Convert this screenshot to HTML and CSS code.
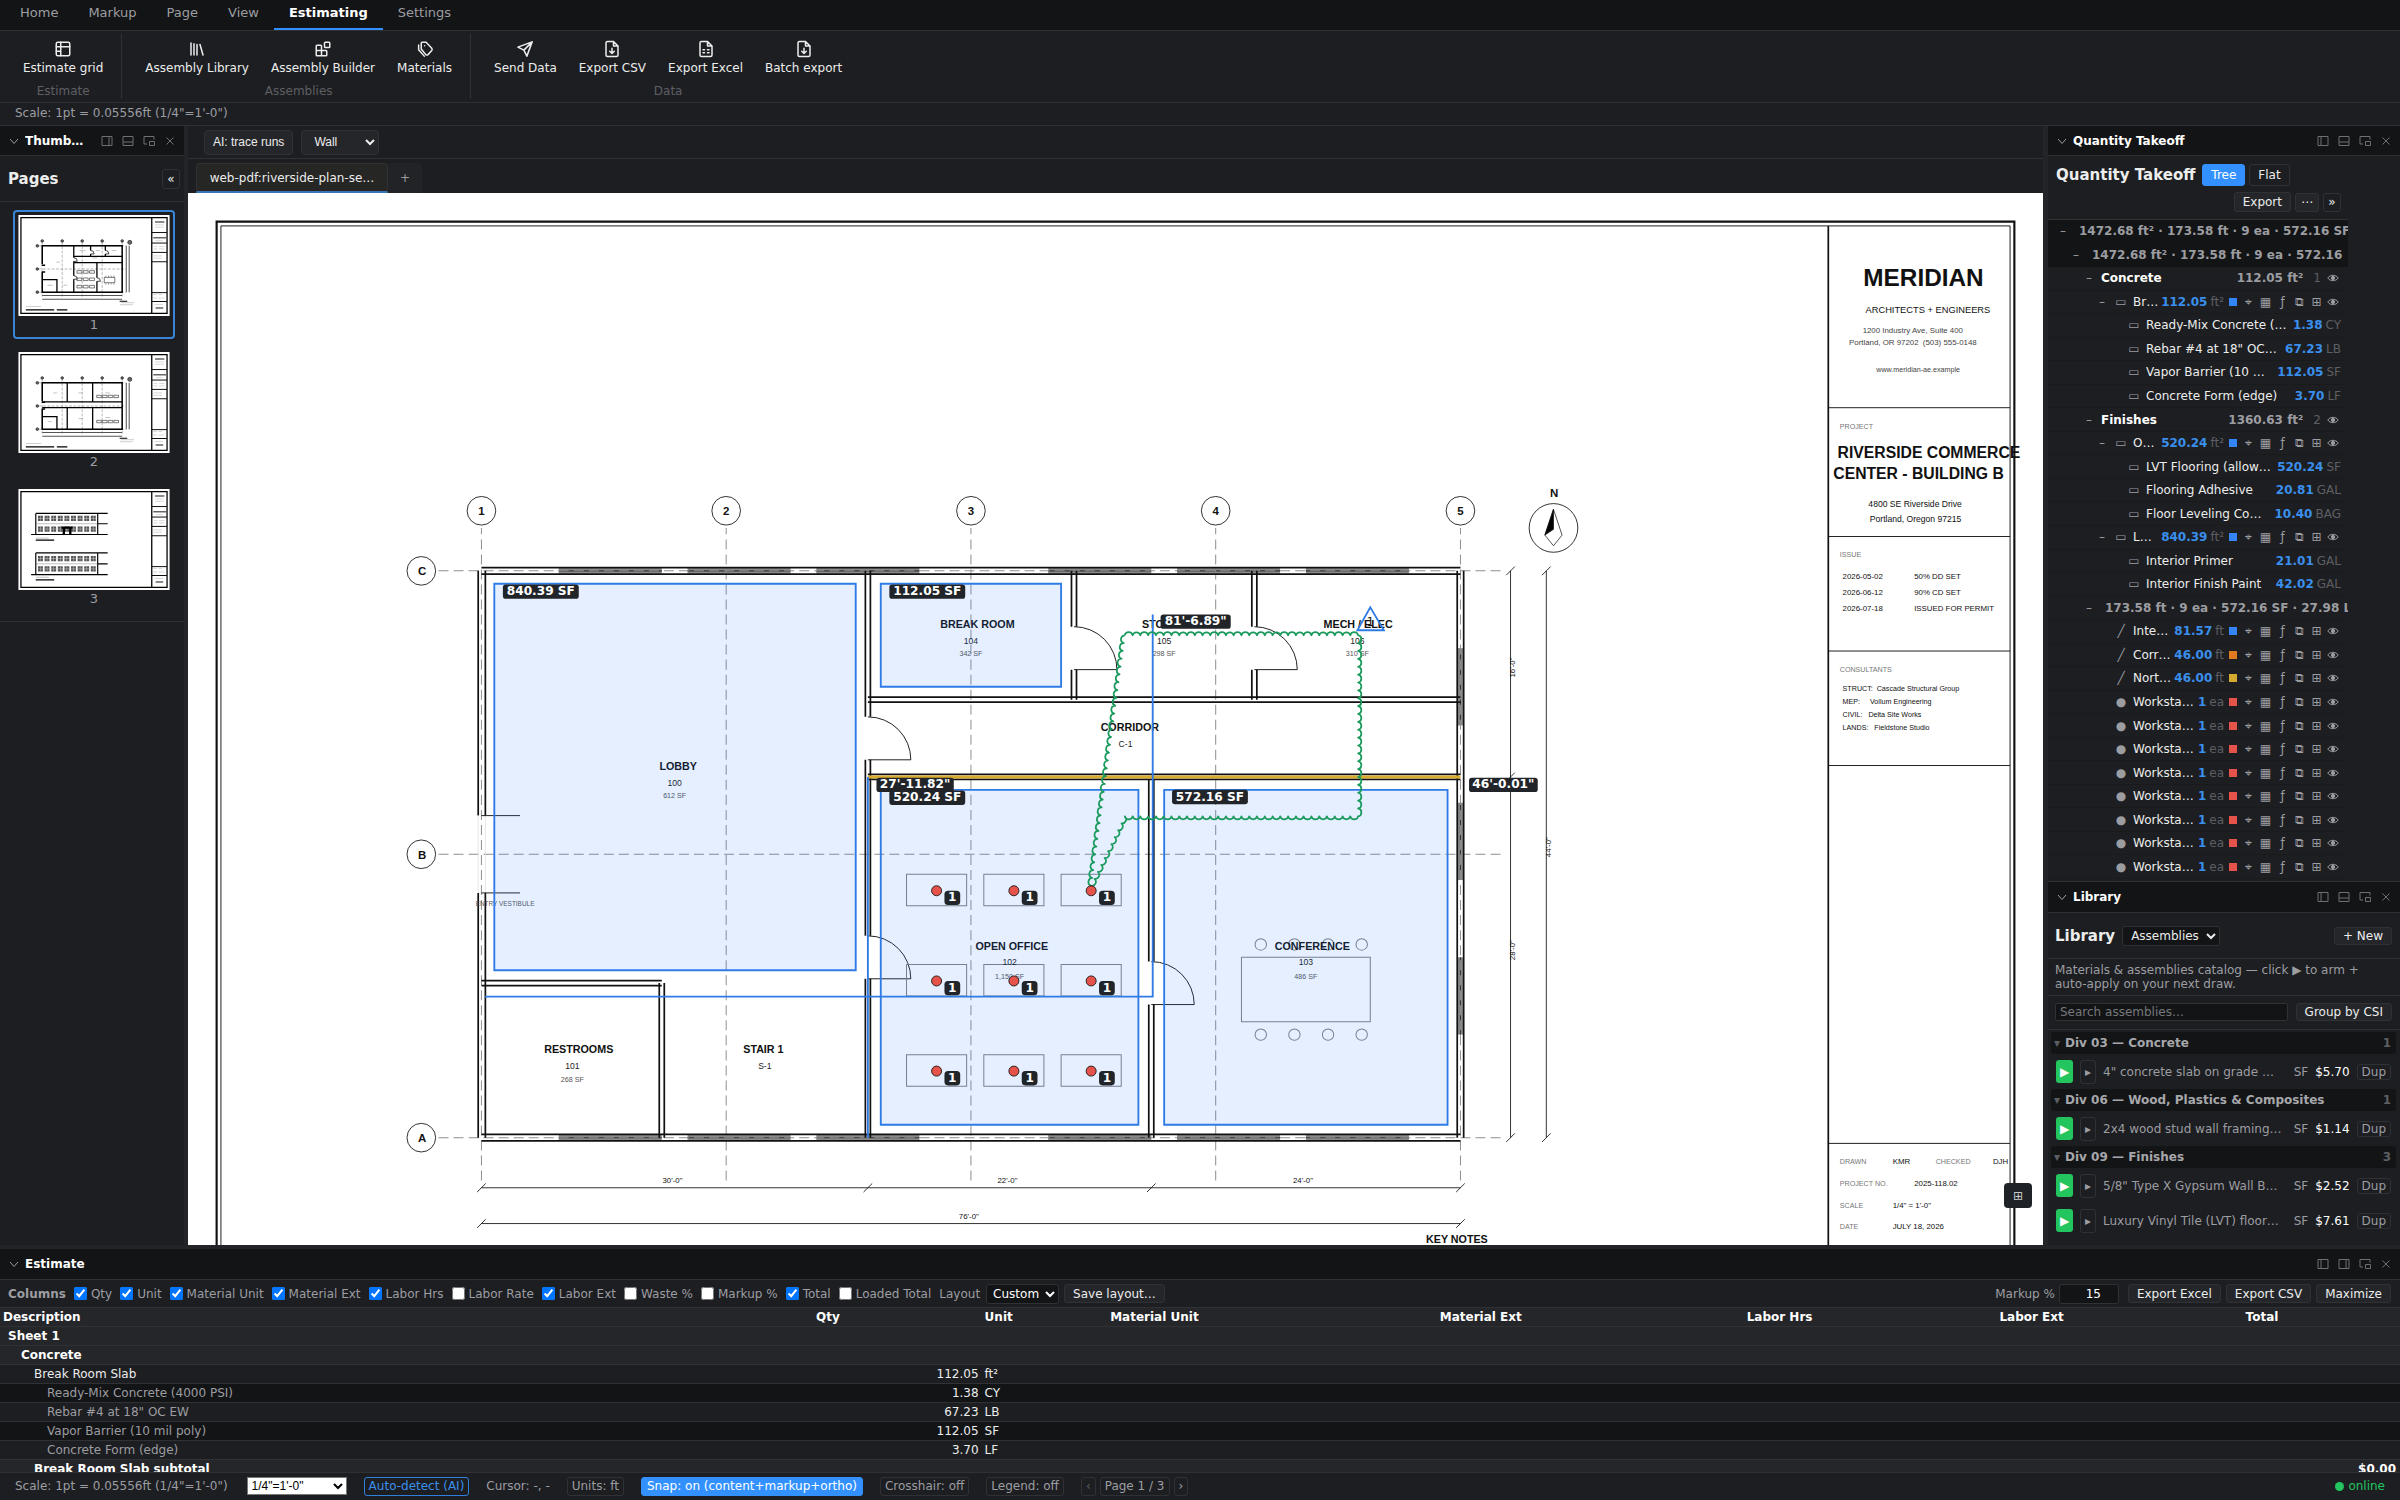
FILE: index.html
```html
<!DOCTYPE html>
<html lang="en">
<head>
<meta charset="utf-8">
<title>Estimating</title>
<link rel="stylesheet" href="styles.css">
</head>
<body>
<svg class="defs" aria-hidden="true">
  <symbol id="i-left" viewBox="0 0 12 12"><path d="M1 1.5h10v9H1zM4 1.5v9"/></symbol>
  <symbol id="i-right" viewBox="0 0 12 12"><path d="M1 1.5h10v9H1zM8 1.5v9"/></symbol>
  <symbol id="i-bottom" viewBox="0 0 12 12"><path d="M1 1.5h10v9H1zM1 7h10"/></symbol>
  <symbol id="i-pop" viewBox="0 0 12 12"><path d="M11 4.5v-3H1v7.500h3M6.500 6.500h5v4h-5z"/></symbol>
  <symbol id="i-close" viewBox="0 0 12 12"><path d="M2.500 2.500l7 7M9.500 2.500l-7 7"/></symbol>
  <symbol id="i-chev" viewBox="0 0 12 12"><path d="M2 4l4 4.500L10 4"/></symbol>
  <symbol id="i-eye" viewBox="0 0 12 12"><path d="M.8 6C3 2.400 9 2.400 11.200 6 9 9.600 3 9.600.8 6z"/><circle cx="6" cy="6" r="1.700" fill="currentColor"/></symbol>
  <symbol id="sheet-frame" viewBox="0 0 2592 1728">
    <path fill="#fff" stroke="none" d="M0 0h2592v1728H0z"/>
    <path stroke-width="22" d="M46 46h2500v1636H46zM2284 46v1636"/>
    <path stroke-width="16" d="M2284 300h260M2284 480h260M2284 640h260M2284 800h260M2284 1328h260M2284 1480h260"/>
    <path stroke-width="26" stroke="#666" d="M2340 118h160M2310 390h220M2350 1590h130"/>
    <path stroke-width="10" stroke="#bbb" d="M2340 170h150M2340 210h150M2350 440h120M2320 540h60M2410 540h90M2320 580h60M2410 580h90M2310 700h150M2310 740h150M2310 1360h60M2400 1360h60M2310 1420h60M2400 1420h100M2330 1530h150"/>
  </symbol>
  <symbol id="sheet-grid" viewBox="0 0 2592 1728">
    <path stroke-width="10" stroke="#888" stroke-dasharray="50 24" d="M410 460v940M752 460v940M1094 460v940M1436 460v940M1778 460v940M350 528h1488M350 924h1488M350 1320h1488"/>
    <g fill="#666" stroke="#333" stroke-width="14"><circle cx="410" cy="444" r="22"/><circle cx="752" cy="444" r="22"/><circle cx="1094" cy="444" r="22"/><circle cx="1436" cy="444" r="22"/><circle cx="1778" cy="444" r="22"/><circle cx="326" cy="528" r="22"/><circle cx="326" cy="924" r="22"/><circle cx="326" cy="1320" r="22"/><circle cx="1908" cy="468" r="34"/></g>
    <path stroke-width="26" d="M410 840V528h1368v792H410V980M400 860h60M400 975h60"/>
    <path stroke-width="18" stroke="#555" d="M410 1378h1368M410 1440h1368M1848 528v792M1898 528v792"/>
    <path stroke-width="20" d="M130 1622h485M660 1622h180M1735 1475h130"/>
    <path stroke-width="10" stroke="#aaa" d="M130 1565h260M1760 1500h220M1740 1535h220"/>
  </symbol>
</svg>

<nav class="tabs" aria-label="Ribbon tabs">
  <a href="#home">Home</a><a href="#markup">Markup</a><a href="#page">Page</a><a href="#view">View</a><a href="#estimating" class="active" aria-current="page">Estimating</a><a href="#settings">Settings</a>
</nav>

<div class="ribbon">
  <section class="group">
    <div class="tools">
      <button><svg viewBox="0 0 24 24"><rect x="3" y="3" width="18" height="18" rx="2"/><path d="M3 9h18M9 3v18M3 15h6"/></svg>Estimate grid</button>
    </div>
    <p>Estimate</p>
  </section>
  <section class="group">
    <div class="tools">
      <button><svg viewBox="0 0 24 24"><path d="M16 6l4 14M12 6v14M8 5v15M4 4v16"/></svg>Assembly Library</button>
      <button><svg viewBox="0 0 24 24"><rect x="14" y="3" width="7" height="7" rx="1"/><path d="M10 21V8a1 1 0 0 0-1-1H4a1 1 0 0 0-1 1v12a1 1 0 0 0 1 1h12a1 1 0 0 0 1-1v-5a1 1 0 0 0-1-1H3"/></svg>Assembly Builder</button>
      <button><svg viewBox="0 0 24 24"><path d="M8 3h5.500l7.500 8a2.500 2.500 0 0 1 0 3l-5 5.500a2.500 2.500 0 0 1-3 0L7 12V4a1 1 0 0 1 1-1zM11.500 7.500v.1M3.500 6.500V13l7.500 8.500"/></svg>Materials</button>
    </div>
    <p>Assemblies</p>
  </section>
  <section class="group">
    <div class="tools">
      <button><svg viewBox="0 0 24 24"><path d="M21.500 2.500L14.500 21.500l-4-8-8-4zM21.500 2.500l-11 11"/></svg>Send Data</button>
      <button><svg viewBox="0 0 24 24"><path d="M14 2H6a2 2 0 0 0-2 2v16a2 2 0 0 0 2 2h12a2 2 0 0 0 2-2V8zM14 2v6h6M12 11v7M9 15l3 3 3-3"/></svg>Export CSV</button>
      <button><svg viewBox="0 0 24 24"><path d="M14 2H6a2 2 0 0 0-2 2v16a2 2 0 0 0 2 2h12a2 2 0 0 0 2-2V8zM14 2v6h6M8 13h2M14 13h2M8 17h2M14 17h2"/></svg>Export Excel</button>
      <button><svg viewBox="0 0 24 24"><path d="M14 2H6a2 2 0 0 0-2 2v16a2 2 0 0 0 2 2h12a2 2 0 0 0 2-2V8zM14 2v6h6M12 11v7M9 15l3 3 3-3"/></svg>Batch export</button>
    </div>
    <p>Data</p>
  </section>
</div>
<div class="scale-line">Scale: 1pt = 0.05556ft (1/4"=1'-0")</div>

<main class="workspace">
  <aside class="left">
    <header class="panel-head">
      <svg class="chev"><use href="#i-chev"/></svg><h2>Thumb…</h2>
      <button aria-label="Dock right"><svg><use href="#i-right"/></svg></button><button aria-label="Dock bottom"><svg><use href="#i-bottom"/></svg></button><button aria-label="Float"><svg><use href="#i-pop"/></svg></button><button aria-label="Close"><svg><use href="#i-close"/></svg></button>
    </header>
    <div class="pages-head"><h3>Pages</h3><button class="btn square" aria-label="Collapse">«</button></div>
    <ol class="thumbs">
      <li class="current">
        <svg viewBox="0 0 2592 1728"><use href="#sheet-frame"/><use href="#sheet-grid"/>
          <path stroke-width="22" d="M950 528v204M950 792v246M950 1098v222M950 708h828M950 816h828M1238 528v78M1238 666v42M1490 528v78M1490 666v42M1346 816v258M1346 1134v186M410 1104h252v216"/>
          <path stroke-width="12" d="M950 732q60 0 60 60h-60M950 1038q60 0 60 60h-60M1238 606q60 0 60 60h-60M1490 606q60 0 60 60h-60M1346 1074q60 0 60 60h-60"/>
          <path stroke-width="12" stroke="#444" d="M1004 952h84v44h-84zM1112 952h84v44h-84zM1220 952h84v44h-84zM1004 1078h84v44h-84zM1112 1078h84v44h-84zM1220 1078h84v44h-84zM1004 1204h84v44h-84zM1112 1204h84v44h-84zM1220 1204h84v44h-84zM1472 1068h180v90h-180z"/>
          <path stroke-width="16" stroke="#555" stroke-dasharray="16 30" d="M1490 1048h160M1490 1178h160"/>
          <path stroke-width="12" stroke="#aaa" d="M650 806h70M500 1202h90M770 1202h70M1050 608h100M1330 608h70M1600 608h80M1270 735h80"/>
        </svg><span>1</span>
      </li>
      <li>
        <svg viewBox="0 0 2592 1728"><use href="#sheet-frame"/><use href="#sheet-grid"/>
          <path stroke-width="22" d="M838 528v324M838 950v370M1273 528v324M1273 950v370M410 852h1368M410 950h1368M410 1104h252v216"/>
          <path stroke-width="12" stroke="#444" d="M1342 740h80v40h-80zM1440 740h80v40h-80zM1538 740h80v40h-80zM1636 740h80v40h-80zM1342 1170h80v40h-80zM1440 1170h80v40h-80zM1538 1170h80v40h-80zM1636 1170h80v40h-80z"/>
          <path stroke-width="12" stroke="#aaa" d="M600 700h60M1030 700h80M1490 700h80M1030 1140h80M1490 1120h80M510 1190h60"/>
        </svg><span>2</span>
      </li>
      <li>
        <svg viewBox="0 0 2592 1728"><use href="#sheet-frame"/>
          <path stroke-width="20" d="M300 418h1230M300 418v360M1359 418v360M220 778h1310M1359 594h171M300 1093h1230M300 1093v371M1359 1093v371M220 1464h1310M1359 1280h171M300 875h315M300 1556h315"/>
          <path stroke-width="8" stroke="#777" d="M300 594h1059M300 1280h1059M300 840h220M300 1510h220"/>
          <path stroke-width="90" stroke="#555" stroke-dasharray="84 29" d="M338 504h1000M338 685h1000M338 1190h1000M338 1367h1000"/>
          <path stroke-width="8" stroke="#ddd" d="M338 504h1000M338 685h1000M338 1190h1000M338 1367h1000"/>
          <path stroke-width="90" stroke="#ccc" stroke-dasharray="8 105" stroke-dashoffset="-38" d="M338 504h1000M338 685h1000M338 1190h1000M338 1367h1000"/>
          <path stroke-width="40" d="M740 660h190M780 660v118M890 660v118"/>
        </svg><span>3</span>
      </li>
    </ol>
  </aside>

  <section class="center">
    <div class="canvas-tools">
      <button class="arial">AI: trace runs</button>
      <select class="arial" aria-label="Trace type"><option>Wall</option></select>
    </div>
    <div class="doc-tabs"><button class="doc">web-pdf:riverside-plan-se…</button><button class="add" aria-label="New tab">+</button></div>
    <div class="canvas">
      <svg class="sheet" viewBox="0 0 2592 1728">
        <g class="frame">
          <path class="w3" d="M40 40h2512v1648H40z"/>
          <path class="w1" d="M46 46h2500v1636H46z"/>
          <path class="w2" d="M2292 46v1636"/>
          <path class="w1" d="M2292 300h254M2292 480h254M2292 640h254M2292 800h254M2292 1328h254"/>
        </g>
        <g id="windows" class="windows"></g>
        <g class="grid-lines">
          <path d="M410 1380V468M752 1380V468M1094 1380V468M1436 1380V468M1778 1380V468M350 528H1838M350 924H1838M350 1320H1838"/>
        </g>
        <g class="walls">
          <path class="w2" d="M410 523.500H1778M410 532.500H1778M410 1315.500H1778M410 1324.500H1778M1773.500 528V1320M1782.500 528V1320M405.500 528V870M415.500 528V870M405.500 978V1320M415.500 978V1320"/>
          <path class="faint" d="M405.500 870V978M415.500 870V978"/>
          <path class="w2" d="M946.500 528V732M953.500 528V732M946.500 792V1038M953.500 792V1038M946.500 1098V1320M953.500 1098V1320M950 704.500H1778M950 711.500H1778M950 812.500H1778M950 819.500H1778M1234.500 528V606M1241.500 528V606M1234.500 666V708M1241.500 666V708M1486.500 528V606M1493.500 528V606M1486.500 666V708M1493.500 666V708M1342.500 819V1074M1349.500 819V1074M1342.500 1134V1320M1349.500 1134V1320M410 1100.500H662M410 1107.500H662M658.500 1104V1320M665.500 1104V1320"/>
          <path class="w1" d="M410 870h54M410 978h54M950 732a60 60 0 0 1 60 60h-60M950 1038a60 60 0 0 1 60 60h-60M1238 606a60 60 0 0 1 60 60h-60M1490 606a60 60 0 0 1 60 60h-60M1346 1074a60 60 0 0 1 60 60h-60"/>
        </g>
        <g class="furniture">
          <path d="M1004 952h84v44h-84zM1112 952h84v44h-84zM1220 952h84v44h-84zM1004 1078h84v44h-84zM1112 1078h84v44h-84zM1220 1078h84v44h-84zM1004 1204h84v44h-84zM1112 1204h84v44h-84zM1220 1204h84v44h-84zM1472 1068h180v90h-180z"/>
          <circle cx="1499" cy="1050" r="8"/><circle cx="1546" cy="1050" r="8"/><circle cx="1593" cy="1050" r="8"/><circle cx="1640" cy="1050" r="8"/>
          <circle cx="1499" cy="1176" r="8"/><circle cx="1546" cy="1176" r="8"/><circle cx="1593" cy="1176" r="8"/><circle cx="1640" cy="1176" r="8"/>
        </g>
        <g class="bubbles">
          <circle cx="410" cy="444" r="20"/><circle cx="752" cy="444" r="20"/><circle cx="1094" cy="444" r="20"/><circle cx="1436" cy="444" r="20"/><circle cx="1778" cy="444" r="20"/><circle cx="326" cy="528" r="20"/><circle cx="326" cy="924" r="20"/><circle cx="326" cy="1320" r="20"/>
          <text x="410" y="450">1</text><text x="752" y="450">2</text><text x="1094" y="450">3</text><text x="1436" y="450">4</text><text x="1778" y="450">5</text><text x="327" y="534">C</text><text x="327" y="930">B</text><text x="327" y="1326">A</text>
          <circle cx="1908" cy="468" r="34"/><text x="1909" y="425">N</text>
          <path d="M1908 442l12 36-12 15-12-15z"/><path class="solid" d="M1908 442v28l-12 8z"/>
        </g>
        <g class="rooms">
          <text class="n" x="685" y="806">LOBBY</text><text class="i" x="680" y="828">100</text><text class="a" x="680" y="846">612 SF</text>
          <text class="n" x="1103" y="608">BREAK ROOM</text><text class="i" x="1094" y="630">104</text><text class="a" x="1094" y="647">342 SF</text>
          <text class="n" x="1370" y="608">STORAGE</text><text class="i" x="1364" y="630">105</text><text class="a" x="1364" y="647">298 SF</text>
          <text class="n" x="1635" y="608">MECH / ELEC</text><text class="i" x="1634" y="630">106</text><text class="a" x="1634" y="647">310 SF</text>
          <text class="n" x="1316" y="752">CORRIDOR</text><text class="i" x="1310" y="774">C-1</text>
          <text class="n" x="1151" y="1058">OPEN OFFICE</text><text class="i" x="1148" y="1079">102</text><text class="a" x="1148" y="1098">1,150 SF</text>
          <text class="n" x="1571" y="1058">CONFERENCE</text><text class="i" x="1562" y="1079">103</text><text class="a" x="1562" y="1098">486 SF</text>
          <text class="n" x="546" y="1202">RESTROOMS</text><text class="i" x="537" y="1224">101</text><text class="a" x="537" y="1242">268 SF</text>
          <text class="n" x="804" y="1202">STAIR 1</text><text class="i" x="806" y="1224">S-1</text>
          <text class="v" x="443" y="996">ENTRY VESTIBULE</text>
          <text class="n" x="1773" y="1467">KEY NOTES</text>
        </g>
        <g class="dims">
          <path d="M410 1390H1778M410 1440H1778M1848 528V1320M1898 528V1320"/>
          <path d="M404 1396l12-12M944 1396l12-12M1340 1396l12-12M1772 1396l12-12M404 1446l12-12M1772 1446l12-12M1842 534l12-12M1842 822l12-12M1842 1326l12-12M1892 534l12-12M1892 1326l12-12"/>
          <text x="677" y="1384">30'-0"</text><text x="1145" y="1384">22'-0"</text><text x="1558" y="1384">24'-0"</text><text x="1091" y="1434">76'-0"</text>
          <text transform="translate(1854 663) rotate(-90)">16'-0"</text><text transform="translate(1854 1058) rotate(-90)">28'-0"</text><text transform="translate(1904 914) rotate(-90)">44'-0"</text>
        </g>
        <g class="title-block">
          <text class="t34" x="2341" y="130">MERIDIAN</text>
          <text class="t13" x="2344" y="168">ARCHITECTS + ENGINEERS</text>
          <text class="t11 mid" x="2340" y="196">1200 Industry Ave, Suite 400</text>
          <text class="t11 mid" x="2321" y="213">Portland, OR 97202  (503) 555-0148</text>
          <text class="t10 mid" x="2359" y="250">www.meridian-ae.example</text>
          <text class="t10 dim" x="2308" y="330">PROJECT</text>
          <text class="t22" x="2305" y="370">RIVERSIDE COMMERCE</text>
          <text class="t22" x="2299" y="400">CENTER - BUILDING B</text>
          <text class="t12" x="2348" y="439">4800 SE Riverside Drive</text>
          <text class="t12" x="2350" y="460">Portland, Oregon 97215</text>
          <text class="t10 dim" x="2308" y="509">ISSUE</text>
          <text class="t11" x="2312" y="540">2026-05-02</text><text class="t11" x="2412" y="540">50% DD SET</text>
          <text class="t11" x="2312" y="562">2026-06-12</text><text class="t11" x="2412" y="562">90% CD SET</text>
          <text class="t11" x="2312" y="584">2026-07-18</text><text class="t11" x="2412" y="584">ISSUED FOR PERMIT</text>
          <text class="t10 dim" x="2308" y="669">CONSULTANTS</text>
          <text class="t10" x="2312" y="696">STRUCT:  Cascade Structural Group</text>
          <text class="t10" x="2312" y="714">MEP:     Vollum Engineering</text>
          <text class="t10" x="2312" y="732">CIVIL:   Delta Site Works</text>
          <text class="t10" x="2312" y="750">LANDS:   Fieldstone Studio</text>
          <text class="t10 dim" x="2308" y="1357">DRAWN</text><text class="t11" x="2382" y="1357">KMR</text><text class="t10 dim" x="2442" y="1357">CHECKED</text><text class="t11" x="2522" y="1357">DJH</text>
          <text class="t10 dim" x="2308" y="1387">PROJECT NO.</text><text class="t11" x="2412" y="1387">2025-118.02</text>
          <text class="t10 dim" x="2308" y="1418">SCALE</text><text class="t11" x="2382" y="1418">1/4" = 1'-0"</text>
          <text class="t10 dim" x="2308" y="1448">DATE</text><text class="t11" x="2382" y="1448">JULY 18, 2026</text>
        </g>
        <g class="markups">
          <path class="area" d="M428 546h505v540H428zM968 546h252v144H968zM968 834h360v468H968zM1364 834h396v468h-396z"/>
          <path class="yellow" d="M950 816H1778"/>
          <path class="blue" d="M950 816V1320M1348 589V1123H415M1652 579l19 32h-37z"/>
          <text class="rev" x="1652" y="605">1</text>
          <path id="cloud" class="cloud"/>
          <g id="counts"></g>
          <g id="pills"></g>
        </g>
      </svg>
      <button class="grid-toggle" aria-label="Toggle grid">⊞</button>
    </div>
  </section>

  <aside class="right">
    <section class="takeoff">
      <header class="panel-head">
        <svg class="chev"><use href="#i-chev"/></svg><h2>Quantity Takeoff</h2>
        <button aria-label="Dock left"><svg><use href="#i-left"/></svg></button><button aria-label="Dock bottom"><svg><use href="#i-bottom"/></svg></button><button aria-label="Float"><svg><use href="#i-pop"/></svg></button><button aria-label="Close"><svg><use href="#i-close"/></svg></button>
      </header>
      <div class="takeoff-body">
        <div class="takeoff-head">
          <div class="line"><h3>Quantity Takeoff</h3><button class="btn primary">Tree</button><button class="btn ghost">Flat</button></div>
          <div class="line end"><button class="btn">Export</button><button class="btn dots">⋯</button><button class="btn square" aria-label="Collapse">»</button></div>
        </div>
        <ul id="tree" class="tree"></ul>
      </div>
    </section>
    <section class="library">
      <header class="panel-head">
        <svg class="chev"><use href="#i-chev"/></svg><h2>Library</h2>
        <button aria-label="Dock left"><svg><use href="#i-left"/></svg></button><button aria-label="Dock bottom"><svg><use href="#i-bottom"/></svg></button><button aria-label="Float"><svg><use href="#i-pop"/></svg></button><button aria-label="Close"><svg><use href="#i-close"/></svg></button>
      </header>
      <div class="lib-title"><h3>Library</h3><select aria-label="Library type"><option>Assemblies</option></select><button class="btn">+ New</button></div>
      <p class="lib-note">Materials &amp; assemblies catalog — click ▶ to arm + auto-apply on your next draw.</p>
      <div class="lib-search"><input type="text" placeholder="Search assemblies…" aria-label="Search assemblies"><button class="btn">Group by CSI</button></div>
      <div class="lib-list">
        <h4><i>▾</i>Div 03 — Concrete<span>1</span></h4>
        <div class="item"><button class="arm" aria-label="Arm">▶</button><button class="open" aria-label="Expand">▸</button><span class="name">4" concrete slab on grade …</span><span>SF</span><b>$5.70</b><button class="dup">Dup</button></div>
        <h4><i>▾</i>Div 06 — Wood, Plastics &amp; Composites<span>1</span></h4>
        <div class="item"><button class="arm" aria-label="Arm">▶</button><button class="open" aria-label="Expand">▸</button><span class="name">2x4 wood stud wall framing…</span><span>SF</span><b>$1.14</b><button class="dup">Dup</button></div>
        <h4><i>▾</i>Div 09 — Finishes<span>3</span></h4>
        <div class="item"><button class="arm" aria-label="Arm">▶</button><button class="open" aria-label="Expand">▸</button><span class="name">5/8" Type X Gypsum Wall B…</span><span>SF</span><b>$2.52</b><button class="dup">Dup</button></div>
        <div class="item"><button class="arm" aria-label="Arm">▶</button><button class="open" aria-label="Expand">▸</button><span class="name">Luxury Vinyl Tile (LVT) floor…</span><span>SF</span><b>$7.61</b><button class="dup">Dup</button></div>
      </div>
    </section>
  </aside>
</main>

<section class="estimate">
  <header class="panel-head">
    <svg class="chev"><use href="#i-chev"/></svg><h2>Estimate</h2>
    <button aria-label="Dock left"><svg><use href="#i-left"/></svg></button><button aria-label="Dock right"><svg><use href="#i-right"/></svg></button><button aria-label="Float"><svg><use href="#i-pop"/></svg></button><button aria-label="Close"><svg><use href="#i-close"/></svg></button>
  </header>
  <div class="columns">
    <strong>Columns</strong>
    <label><input type="checkbox" checked>Qty</label><label><input type="checkbox" checked>Unit</label><label><input type="checkbox" checked>Material Unit</label><label><input type="checkbox" checked>Material Ext</label><label><input type="checkbox" checked>Labor Hrs</label><label><input type="checkbox">Labor Rate</label><label><input type="checkbox" checked>Labor Ext</label><label><input type="checkbox">Waste %</label><label><input type="checkbox">Markup %</label><label><input type="checkbox" checked>Total</label><label><input type="checkbox">Loaded Total</label>
    <label class="pick">Layout<select><option>Custom</option></select></label>
    <button class="btn">Save layout…</button>
    <label class="pick markup">Markup %<input type="text" value="15"></label>
    <button class="btn">Export Excel</button><button class="btn">Export CSV</button><button class="btn">Maximize</button>
  </div>
  <div class="table-wrap">
    <table>
      <colgroup><col class="c-desc"><col class="c-qty"><col class="c-unit"><col class="c-mu"><col class="c-me"><col class="c-lh"><col class="c-le"><col class="c-tot"><col class="c-end"></colgroup>
      <thead><tr><th class="l">Description</th><th>Qty</th><th class="l">Unit</th><th>Material Unit</th><th>Material Ext</th><th>Labor Hrs</th><th>Labor Ext</th><th>Total</th><th></th></tr></thead>
      <tbody>
        <tr class="grp"><td class="d0" colspan="9">Sheet 1</td></tr>
        <tr class="grp"><td class="d1" colspan="9">Concrete</td></tr>
        <tr><td class="d2">Break Room Slab</td><td class="num">112.05</td><td>ft²</td><td colspan="6"></td></tr>
        <tr class="alt"><td class="d3">Ready-Mix Concrete (4000 PSI)</td><td class="num">1.38</td><td>CY</td><td colspan="6"></td></tr>
        <tr><td class="d3">Rebar #4 at 18" OC EW</td><td class="num">67.23</td><td>LB</td><td colspan="6"></td></tr>
        <tr class="alt"><td class="d3">Vapor Barrier (10 mil poly)</td><td class="num">112.05</td><td>SF</td><td colspan="6"></td></tr>
        <tr><td class="d3">Concrete Form (edge)</td><td class="num">3.70</td><td>LF</td><td colspan="6"></td></tr>
        <tr class="grp"><td class="d2" colspan="8">Break Room Slab subtotal</td><td class="num">$0.00</td></tr>
      </tbody>
    </table>
  </div>
</section>

<footer class="status">
  <span>Scale: 1pt = 0.05556ft (1/4"=1'-0")</span>
  <select class="arial" aria-label="Scale"><option>1/4"=1'-0"</option></select>
  <button class="outline">Auto-detect (AI)</button>
  <span>Cursor: -, -</span>
  <button>Units: ft</button>
  <button class="on">Snap: on (content+markup+ortho)</button>
  <button>Crosshair: off</button>
  <button>Legend: off</button>
  <div class="pager"><button class="dimmed" aria-label="Previous page">‹</button><button>Page 1 / 3</button><button aria-label="Next page">›</button></div>
  <span class="online">online</span>
</footer>
<script src="app.js"></script>
</body>
</html>
```
FILE: styles.css
```css
:root {
  --deep: #131416;
  --panel: #1d1e21;
  --raised: #25262a;
  --line: #303135;
  --text: #eceded;
  --muted: #9c9da1;
  --dim: #5d5f64;
  --blue: #3291ff;
}
* { box-sizing: border-box; }
body {
  margin: 0; height: 100vh; display: flex; flex-direction: column; overflow: hidden;
  background: var(--panel); color: var(--text);
  font: 12px/14px "DejaVu Sans", sans-serif;
}
h2, h3, h4, p, ul, ol { margin: 0; padding: 0; list-style: none; }
h2 { font-size: 12px; }
h3 { font-size: 15px; line-height: 18px; }
button, select, input { font: inherit; color: inherit; margin: 0; }
button { background: none; border: 0; padding: 0; white-space: nowrap; }
.defs { position: absolute; width: 0; height: 0; }
.arial { font-family: "Liberation Sans", Arial, sans-serif; }
symbol, .thumbs svg { fill: none; stroke: #000; }

.tabs { display: flex; height: 31px; padding-left: 5px; background: var(--deep); border-bottom: 1px solid var(--line); font-size: 13px; line-height: 26px; flex: none; }
.tabs a { padding: 0 15px; color: var(--muted); text-decoration: none; border-bottom: 2px solid transparent; }
.tabs .active { color: #fff; font-weight: bold; border-color: var(--blue); }

.ribbon { display: flex; height: 72px; padding: 3px 0; border-bottom: 1px solid var(--line); flex: none; }
.group { padding: 4px 8px 0 13px; border-right: 1px solid var(--line); text-align: center; }
.group:last-child { border: 0; }
.group p { color: var(--dim); margin-top: 5px; }
.tools { display: flex; gap: 2px; justify-content: center; }
.tools button { display: flex; flex-direction: column; align-items: center; gap: 3px; padding: 0 10px; height: 41px; }
.tools svg { width: 18px; height: 18px; margin-top: 2px; fill: none; stroke: currentColor; stroke-width: 2; stroke-linecap: round; stroke-linejoin: round; }
.scale-line { height: 23px; padding: 3px 15px; color: var(--muted); border-bottom: 1px solid var(--line); flex: none; }

.workspace { flex: 1; min-height: 0; display: grid; grid-template-columns: 188px 1fr 357px; grid-template-rows: minmax(0, 1fr); }
.left { border-right: 4px solid #232427; }
.right { border-left: 5px solid #232427; display: flex; flex-direction: column; min-width: 0; }

.panel-head { display: flex; align-items: center; height: 30px; padding: 0 8px; background: var(--deep); border-bottom: 1px solid var(--line); color: #fff; flex: none; }
.panel-head h2 { flex: 1; min-width: 0; margin-left: 5px; overflow: hidden; text-overflow: ellipsis; white-space: nowrap; }
.panel-head svg { display: block; width: 12px; height: 12px; fill: none; }
.panel-head button { margin-left: 9px; color: #6d6f74; }
.chev { color: var(--muted); }
symbol#i-left, symbol#i-right, symbol#i-bottom, symbol#i-pop, symbol#i-close, symbol#i-chev, symbol#i-eye { stroke: currentColor; }

.btn { height: 20px; padding: 0 8px; background: var(--raised); border: 1px solid var(--line); border-radius: 3px; }
.square { width: 18px; padding: 0; background: none; }
.primary { background: var(--blue); border-color: var(--blue); color: #fff; }
.ghost { background: none; }

.pages-head { display: flex; justify-content: space-between; align-items: center; height: 46px; padding: 0 4px 0 8px; border-bottom: 1px solid var(--line); }
.thumbs { display: flex; flex-direction: column; gap: 8px; padding: 8px 9px 8px 13px; border-bottom: 1px solid var(--line); }
.thumbs li { padding: 3px; border: 2px solid transparent; border-radius: 4px; text-align: center; color: var(--muted); font-size: 13px; line-height: 18px; }
.thumbs .current { border-color: #3a84d8; }
.thumbs svg { display: block; width: 100%; height: 101px; }
.thumbs span { display: block; }

.center { display: flex; flex-direction: column; min-width: 0; }
.canvas-tools { display: flex; align-items: center; gap: 8px; height: 33px; padding: 0 16px; border-bottom: 1px solid var(--line); flex: none; }
.canvas-tools > * { height: 25px; background: var(--raised); border: 1px solid var(--line); border-radius: 4px; padding: 0 8px; }
.canvas-tools select { width: 78px; }
.doc-tabs { display: flex; height: 34px; padding: 4px 8px 0; flex: none; }
.doc { width: 192px; background: #262624; border: 1px solid var(--line); border-bottom: 2px solid #3a74b8; border-radius: 4px 4px 0 0; height: 30px; }
.add { width: 34px; height: 30px; background: #222326; color: var(--muted); border-radius: 4px 4px 0 0; }
.canvas { position: relative; flex: 1; min-height: 0; background: #fff; overflow: hidden; }
.sheet { display: block; width: 100%; fill: none; stroke: none; font-family: "Liberation Sans", Arial, sans-serif; }
.grid-toggle { position: absolute; right: 11px; bottom: 37px; width: 28px; height: 25px; background: #1f2226; border-radius: 4px; color: #c8c9cb; }

.sheet path, .sheet circle { stroke: #111; }
.sheet .w1 { stroke-width: 1.3; }
.sheet .w2 { stroke-width: 2.4; }
.sheet .w3 { stroke-width: 3; }
.sheet .faint { stroke: #ddd; }
.sheet text { fill: #111; stroke: none; white-space: pre; }
.sheet .grid-lines path { stroke: #8f8f8f; stroke-width: 1.4; stroke-dasharray: 14 7; }
.sheet .windows rect { fill: #8a8a8a; }
.sheet .windows path { stroke: #333; stroke-width: 1.5; }
.sheet .furniture * { stroke: #808080; stroke-width: 1.4; }
.sheet .bubbles circle { fill: #fff; stroke-width: 1.2; }
.sheet .bubbles text { font-size: 16px; font-weight: bold; text-anchor: middle; }
.sheet .bubbles .solid { fill: #000; }
.rooms text { text-anchor: middle; }
.rooms .n { font-size: 15px; font-weight: bold; }
.sheet .rooms .i { font-size: 12px; fill: #222; }
.sheet .rooms .a { font-size: 10px; fill: #555; }
.sheet .rooms .v { font-size: 9px; fill: #555; }
.dims path { stroke-width: 1.2; }
.dims text { font-size: 11px; text-anchor: middle; }
.title-block .t34 { font-size: 34px; font-weight: bold; }
.title-block .t22 { font-size: 22px; font-weight: bold; }
.title-block .t13 { font-size: 13px; }
.title-block .t12 { font-size: 12px; }
.title-block .t11 { font-size: 11px; }
.title-block .t10 { font-size: 10px; }
.sheet .title-block .mid { fill: #444; }
.sheet .title-block .dim { fill: #777; }
.sheet .area { fill: #2f7fff20; stroke: #2f7be6; stroke-width: 2.6; }
.sheet .yellow { stroke: #d9ab2f; stroke-width: 4; }
.sheet .blue { stroke: #2f7be6; stroke-width: 2.6; }
.sheet .cloud { stroke: #1a9a5c; stroke-width: 2.4; stroke-linejoin: round; }
.sheet .rev { font: 16px "DejaVu Sans", sans-serif; text-anchor: middle; }
#counts circle { fill: #e5534b; stroke: #111; stroke-width: 1.2; }
#counts rect, #pills rect { fill: #212529; }
#counts text, #pills text { fill: #fff; font: bold 17px "DejaVu Sans", sans-serif; text-anchor: middle; }

.takeoff { flex: 1; min-height: 0; display: flex; flex-direction: column; }
.takeoff-body { width: 300px; flex: 1; min-height: 0; display: flex; flex-direction: column; }
.takeoff-head { display: flex; flex-direction: column; gap: 6px; padding: 8px 7px 7px 8px; border-bottom: 1px solid var(--line); }
.line { display: flex; align-items: center; gap: 4px; }
.line h3 { margin-right: 3px; }
.line .btn { height: 22px; }
.line .dots { width: 24px; padding: 0; height: 19px; }
.line .square { height: 19px; }
.end { justify-content: flex-end; }
.end .btn:first-child { height: 20px; }
.tree { flex: 1; min-height: 0; display: grid; grid-auto-rows: minmax(0, 1fr); overflow: hidden; padding-bottom: 2px; }
.tree li { display: flex; align-items: center; padding-right: 7px; border-bottom: 1px solid #191a1c; white-space: nowrap; min-width: 0; overflow: hidden; line-height: 16px; }
.tree .cat, .tree .mark, .tree .leaf { padding-right: 9px; }
.tree .total { background: var(--deep); border-color: var(--deep); color: var(--muted); font-weight: bold; padding-right: 0; }
.tree .sum { color: var(--muted); font-weight: bold; padding-right: 0; }
.tree .l0 { padding-left: 12px; }
.tree .l1 { padding-left: 25px; }
.tree .l2 { padding-left: 38px; }
.tree .l3 { padding-left: 51px; }
.tree .l4 { padding-left: 79px; }
.tog { width: 15px; color: var(--muted); font-weight: normal; flex: none; }
.total .tog, .sum .tog { width: 19px; }
.cat b { flex: 1; color: #fff; }
.cat em { font-style: normal; font-weight: bold; color: var(--muted); }
.cat small { margin: 0 4px 0 10px; color: var(--dim); font-size: 12px; }
.shape { width: 19px; color: var(--muted); flex: none; text-align: center; padding-right: 5px; }
.name { flex: 1; min-width: 0; overflow: hidden; white-space: nowrap; }
.val { color: #3a8fec; font-weight: bold; }
.unit { color: var(--dim); margin-left: 3px; }
.sw { width: 8px; height: 8px; margin: 0 3px 0 5px; flex: none; }
.act { width: 17px; text-align: center; color: var(--muted); flex: none; }
.eye { width: 12px; height: 12px; color: var(--muted); fill: none; flex: none; margin-left: 2px; }

.library { flex: none; padding-bottom: 7px; border-top: 1px solid var(--line); }
.library .panel-head { height: 31px; }
.lib-title { display: flex; align-items: center; gap: 7px; height: 46px; padding: 0 8px 0 7px; border-bottom: 1px solid var(--line); }
.lib-title .btn { margin-left: auto; height: 18px; }
.lib-title select { height: 20px; width: 98px; padding: 0 4px; background: var(--deep); border: 1px solid var(--line); border-radius: 3px; }
.lib-note { padding: 4px 8px 4px 7px; color: var(--muted); border-bottom: 1px solid var(--line); }
.lib-search { display: flex; gap: 8px; padding: 7px 8px 8px 7px; border-bottom: 1px solid var(--line); }
.lib-search input { flex: 1; min-width: 0; height: 18px; padding: 0 4px; background: var(--deep); border: 1px solid var(--line); border-radius: 2px; }
.lib-search input::placeholder { color: #77787c; }
.lib-search .btn { height: 18px; }
.lib-list { padding: 2px 4px 0 3px; }
.lib-list h4 { display: flex; height: 22px; align-items: center; padding: 0 5px 0 3px; background: var(--deep); border-radius: 3px; color: #a6a7ab; font-size: 12px; }
.lib-list h4 i { width: 11px; font-style: normal; font-weight: normal; color: var(--dim); }
.lib-list h4 span { margin-left: auto; color: var(--dim); }
.item { display: flex; align-items: center; gap: 7px; height: 35px; padding: 0 5px; color: var(--muted); }
.item b { font-weight: normal; color: #fff; }
.arm { width: 17px; height: 23px; background: #22c55e; border-radius: 3px; color: #fff; }
.open { width: 16px; height: 24px; border: 1px solid var(--line); border-radius: 3px; }
.dup { height: 16px; padding: 0 4px; border: 1px solid var(--line); border-radius: 3px; line-height: 14px; }

.estimate { flex: none; height: 227px; display: flex; flex-direction: column; border-top: 4px solid #232427; }
.estimate .panel-head { height: 31px; }
.columns { display: flex; align-items: center; gap: 8px; height: 28px; padding: 0 9px 0 8px; color: var(--muted); border-bottom: 1px solid var(--line); flex: none; }
.columns label { display: flex; align-items: center; gap: 4px; }
.columns input[type="checkbox"] { width: 13px; height: 13px; }
.columns .btn { height: 19px; color: var(--text); margin-left: -3px; }
.columns .pick { gap: 6px; }
.pick select { width: 73px; height: 20px; background: var(--deep); border: 1px solid var(--line); border-radius: 3px; color: #fff; padding: 0 2px; }
.columns .markup { margin-left: auto; gap: 4px; }
.markup input { width: 60px; height: 20px; margin-right: 4px; background: var(--deep); border: 1px solid var(--line); border-radius: 3px; text-align: right; padding: 0 17px; color: #fff; }
.table-wrap { flex: 1; min-height: 0; overflow: hidden; }
table { width: 100%; table-layout: fixed; border-collapse: collapse; }
th, td { height: 19px; padding: 0 3px; line-height: 14px; border-bottom: 1px solid var(--line); white-space: nowrap; text-align: left; }
th { height: 18px; text-align: center; background: var(--raised); color: #fff; }
th.l { text-align: left; }
.grp { background: var(--raised); font-weight: bold; color: #fff; }
.alt { background: var(--deep); }
.num { text-align: right; }
.grp .num { padding: 0 4px 0 0; }
td.d0 { padding-left: 8px; }
td.d1 { padding-left: 21px; }
td.d2 { padding-left: 34px; }
td.d3 { padding-left: 47px; color: var(--muted); }
.c-desc { width: 28.1%; }
.c-qty { width: 12.8%; }
.c-unit { width: 1.6%; }
.c-mu { width: 11.2%; }
.c-me { width: 16%; }
.c-lh { width: 8.9%; }
.c-le { width: 12.1%; }
.c-tot { width: 7.1%; }
.c-end { width: 2.2%; }

.status { display: flex; align-items: center; gap: 17px; height: 28px; padding: 0 15px 1px; color: var(--muted); flex: none; border-top: 1px solid var(--line); }
.status button { height: 19px; padding: 0 4px; border: 1px solid var(--line); border-radius: 3px; }
.status select { width: 100px; height: 18px; margin-left: 2px; background: #fff; color: #000; border: 1px solid #777; border-radius: 0; padding: 0; }
.status .outline { border-color: #2f7fdc; color: #3a8fec; }
.status .on { background: var(--blue); border-color: var(--blue); color: #fff; padding: 0 5px; }
.status .dimmed { color: var(--dim); }
.pager { display: flex; gap: 4px; }
.online { margin-left: auto; color: #22c55e; display: flex; align-items: center; gap: 4px; }
.online::before { content: ""; width: 9px; height: 9px; border-radius: 50%; background: #22c55e; }
```
FILE: app.js
```js
const byId = (id) => document.getElementById(id);

/* Takeoff tree */
const BLUE = '#3485f5', RED = '#e5534b';
const rows = [
  ['total', 0, '1472.68 ft² · 173.58 ft · 9 ea · 572.16 SF'],
  ['total', 1, '1472.68 ft² · 173.58 ft · 9 ea · 572.16'],
  ['cat', 2, 'Concrete', '112.05 ft²', 1],
  ['mark', 3, 'Br…', '112.05', 'ft²', BLUE, '▭'],
  ['part', 4, 'Ready-Mix Concrete (…', '1.38', 'CY'],
  ['part', 4, 'Rebar #4 at 18" OC…', '67.23', 'LB'],
  ['part', 4, 'Vapor Barrier (10 …', '112.05', 'SF'],
  ['part', 4, 'Concrete Form (edge)', '3.70', 'LF'],
  ['cat', 2, 'Finishes', '1360.63 ft²', 2],
  ['mark', 3, 'O…', '520.24', 'ft²', BLUE, '▭'],
  ['part', 4, 'LVT Flooring (allow…', '520.24', 'SF'],
  ['part', 4, 'Flooring Adhesive', '20.81', 'GAL'],
  ['part', 4, 'Floor Leveling Co…', '10.40', 'BAG'],
  ['mark', 3, 'L…', '840.39', 'ft²', BLUE, '▭'],
  ['part', 4, 'Interior Primer', '21.01', 'GAL'],
  ['part', 4, 'Interior Finish Paint', '42.02', 'GAL'],
  ['sum', 2, '173.58 ft · 9 ea · 572.16 SF · 27.98 LF'],
  ['leaf', 3, 'Inte…', '81.57', 'ft', BLUE, '╱'],
  ['leaf', 3, 'Corr…', '46.00', 'ft', '#e07b20', '╱'],
  ['leaf', 3, 'Nort…', '46.00', 'ft', '#d4aa30', '╱'],
];
for (let i = 0; i < 8; i++) rows.push(['leaf', 3, 'Worksta…', '1', 'ea', RED, '●']);

const eye = '<svg class="eye"><use href="#i-eye"/></svg>';
const acts = ['⌖', '▦', 'ƒ', '⧉', '⊞'].map((g) => `<span class="act">${g}</span>`).join('');
byId('tree').innerHTML = rows.map(([kind, depth, name, value, unit, color, shape]) => {
  const tog = `<span class="tog">${kind === 'leaf' || kind === 'part' ? '' : '–'}</span>`;
  let body;
  if (kind === 'total' || kind === 'sum') body = `${tog}<span>${name}</span>`;
  else if (kind === 'cat') body = `${tog}<b>${name}</b><em>${value}</em><small>${unit}</small>${eye}`;
  else {
    body = (kind === 'part' ? '' : tog) + `<span class="shape">${shape || '▭'}</span><span class="name">${name}</span>` +
      `<span class="val">${value}</span><span class="unit">${unit}</span>`;
    if (color) body += `<span class="sw" style="background:${color}"></span>${acts}${eye}`;
  }
  return `<li class="${kind} l${depth}">${body}</li>`;
}).join('');

/* Exterior windows */
let win = '';
for (const x of [518, 698, 878, 1202, 1382, 1562])
  for (const y of [528, 1320]) win += `<rect x="${x}" y="${y - 4}" width="144" height="8"/><path d="M${x} ${y}h144"/>`;
for (const y of [636, 852, 1068]) win += `<rect x="1774" y="${y}" width="8" height="108"/><path d="M1778 ${y}v108"/>`;
byId('windows').innerHTML = win;

/* Workstation counts */
let counts = '';
for (const y of [975, 1101, 1227])
  for (const x of [1046, 1154, 1262])
    counts += `<circle cx="${x}" cy="${y}" r="7"/><rect x="${x + 11}" y="${y}" width="22" height="20" rx="5"/><text x="${x + 22}" y="${y + 15}">1</text>`;
byId('counts').innerHTML = counts;

/* Measurement labels */
byId('pills').innerHTML = [
  [440, 547, 106, '840.39 SF'], [980, 547, 106, '112.05 SF'], [962, 817, 108, '27\'-11.82"'],
  [980, 835, 106, '520.24 SF'], [1375, 834, 106, '572.16 SF'], [1359, 589, 98, '81\'-6.89"'],
  [1790, 817, 96, '46\'-0.01"'],
].map(([x, y, w, t]) => `<rect x="${x}" y="${y}" width="${w}" height="20" rx="4"/><text x="${x + w / 2}" y="${y + 15}">${t}</text>`).join('');

/* Revision cloud: a chain of arcs along each edge */
const pts = [[1309, 618], [1635, 618], [1635, 871], [1309, 871], [1262, 968]];
let d = `M${pts[0]}`;
pts.forEach((p, i) => {
  const q = pts[(i + 1) % pts.length];
  const n = Math.max(1, Math.round(Math.hypot(q[0] - p[0], q[1] - p[1]) / 11));
  for (let k = 1; k <= n; k++)
    d += `A5.6 5.6 0 0 1 ${(p[0] + (q[0] - p[0]) * k / n).toFixed(1)} ${(p[1] + (q[1] - p[1]) * k / n).toFixed(1)}`;
});
byId('cloud').setAttribute('d', d);
```
